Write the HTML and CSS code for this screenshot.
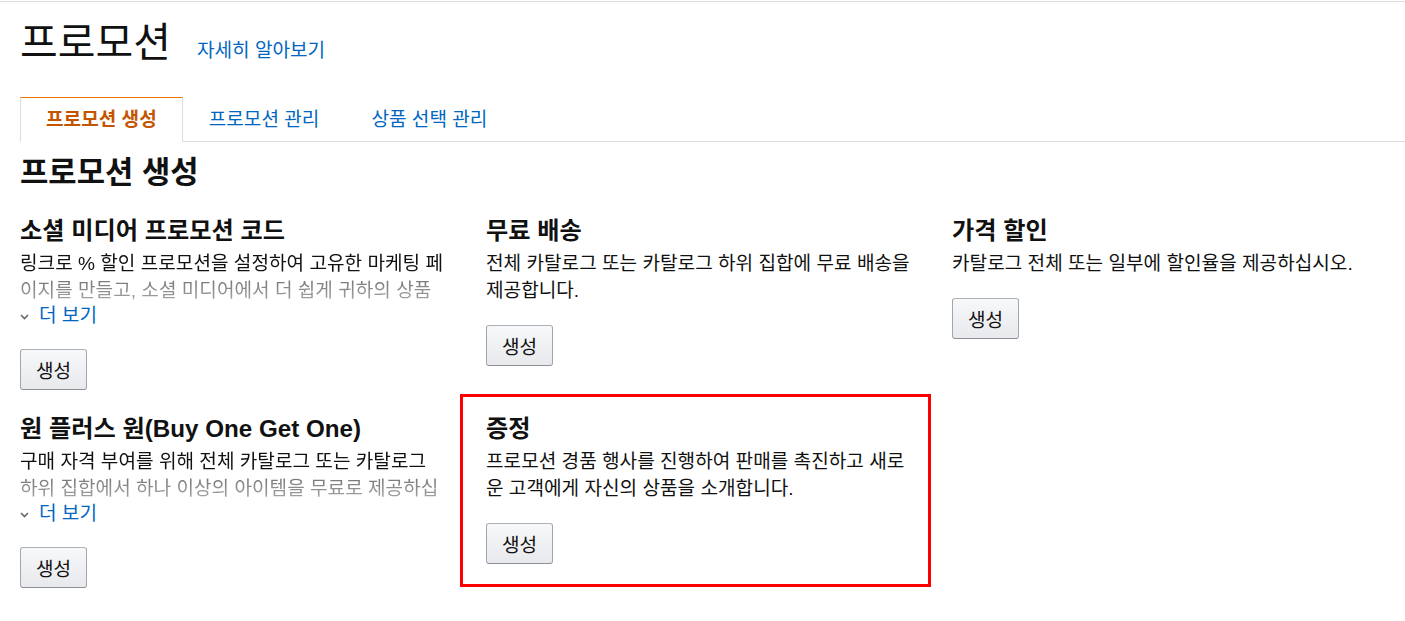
FILE: index.html
```html
<!DOCTYPE html>
<html lang="ko">
<head>
    <meta charset="UTF-8">
    <meta name="viewport" content="width=device-width, initial-scale=1.0">
    <title>프로모션</title>
    <link rel="stylesheet" href="styles.css">
</head>
<body>
    <div class="page">
        <div class="page-head">
            <h1>프로모션</h1>
            <a href="#" class="learn">자세히 알아보기</a>
        </div>
        <ul class="tabs">
            <li class="on"><a href="#">프로모션 생성</a></li>
            <li><a href="#">프로모션 관리</a></li>
            <li><a href="#">상품 선택 관리</a></li>
        </ul>
        <h2>프로모션 생성</h2>
        <div class="types">
            <div class="type">
                <h3>소셜 미디어 프로모션 코드</h3>
                <p class="desc cut">링크로 % 할인 프로모션을 설정하여 고유한 마케팅 페이지를 만들고, 소셜 미디어에서 더 쉽게 귀하의 상품을 홍보하십시오.</p>
                <div class="more">
                    <svg width="9" height="6" viewBox="0 0 9 6"><path d="M1 1l3.5 3.5 3.5-3.5" fill="none" stroke="#666" stroke-width="1.6"/></svg>
                    <a href="#">더 보기</a>
                </div>
                <button class="btn">생성</button>
            </div>
            <div class="type">
                <h3>무료 배송</h3>
                <p class="desc">전체 카탈로그 또는 카탈로그 하위 집합에 무료 배송을 제공합니다.</p>
                <button class="btn">생성</button>
            </div>
            <div class="type">
                <h3>가격 할인</h3>
                <p class="desc">카탈로그 전체 또는 일부에 할인율을 제공하십시오.</p>
                <button class="btn">생성</button>
            </div>
            <div class="type">
                <h3>원 플러스 원(Buy One Get One)</h3>
                <p class="desc cut">구매 자격 부여를 위해 전체 카탈로그 또는 카탈로그 하위 집합에서 하나 이상의 아이템을 무료로 제공하십시오.</p>
                <div class="more">
                    <svg width="9" height="6" viewBox="0 0 9 6"><path d="M1 1l3.5 3.5 3.5-3.5" fill="none" stroke="#666" stroke-width="1.6"/></svg>
                    <a href="#">더 보기</a>
                </div>
                <button class="btn">생성</button>
            </div>
            <div class="type">
                <h3>증정</h3>
                <p class="desc">프로모션 경품 행사를 진행하여 판매를 촉진하고 새로운 고객에게 자신의 상품을 소개합니다.</p>
                <button class="btn">생성</button>
                <div class="mark"></div>
            </div>
        </div>
    </div>
</body>
</html>
```

FILE: styles.css
```css
body {
    margin: 0;
    padding-top: 1px;
    font-family: "Liberation Sans", Arial, "Noto Sans CJK KR", sans-serif;
    font-size: 19.1px;
    color: #111;
    background: #fff;
}
a {
    color: #0066c0;
    text-decoration: none;
}
.page {
    border-top: 1px solid #ddd;
    padding-left: 20px;
}
.page-head {
    display: flex;
    align-items: baseline;
    gap: 26px;
    padding-top: 18px;
}
.page-head h1 {
    margin: 0;
    font-size: 41px;
    font-weight: normal;
    line-height: 46px;
}
.tabs {
    display: flex;
    margin: 31px 0 0;
    padding: 0;
    list-style: none;
    border-bottom: 1px solid #ddd;
}
.tabs li {
    height: 43px;
    margin-bottom: -1px;
    border: 1px solid transparent;
    border-bottom: 0;
}
.tabs li a {
    display: block;
    padding: 0 25px;
    line-height: 43px;
}
.tabs li.on {
    background: #fff;
    border-color: #ddd;
    border-top-color: #e77600;
    height: 44px;
}
.tabs li.on a {
    color: #c45500;
    font-weight: bold;
}
h2 {
    margin: 14px 0 0;
    font-size: 30.8px;
    line-height: 34px;
}
.types {
    display: grid;
    grid-template-columns: repeat(3, 428px);
    column-gap: 38px;
    row-gap: 24px;
    align-items: start;
    margin-top: 26px;
}
.type {
    position: relative;
}
.type h3 {
    margin: 0;
    font-size: 24.2px;
    line-height: 30px;
}
.type .desc {
    margin: 4px 0 0;
    line-height: 27px;
}
.type .desc.cut {
    max-height: 54px;
    overflow: hidden;
    -webkit-mask-image: linear-gradient(#000 27px, rgba(0, 0, 0, 0.6) 27px, rgba(0, 0, 0, 0.35) 54px);
    mask-image: linear-gradient(#000 27px, rgba(0, 0, 0, 0.6) 27px, rgba(0, 0, 0, 0.35) 54px);
}
.more {
    display: flex;
    align-items: center;
    gap: 10px;
    line-height: 24px;
}
.more svg {
    display: block;
    margin-top: 2px;
}
.btn {
    display: block;
    height: 41px;
    margin-top: 21px;
    padding: 0 15px;
    font-family: inherit;
    font-size: 19.1px;
    color: #111;
    background: linear-gradient(#f7f8fa, #e7e9ec);
    border: 1px solid #adb1b8;
    border-color: #adb1b8 #a2a6ac #8d9096;
    border-radius: 3px;
    cursor: pointer;
}
.mark {
    position: absolute;
    top: -20px;
    left: -26px;
    right: -17px;
    bottom: -23px;
    border: 3px solid #f00;
    pointer-events: none;
}
```
